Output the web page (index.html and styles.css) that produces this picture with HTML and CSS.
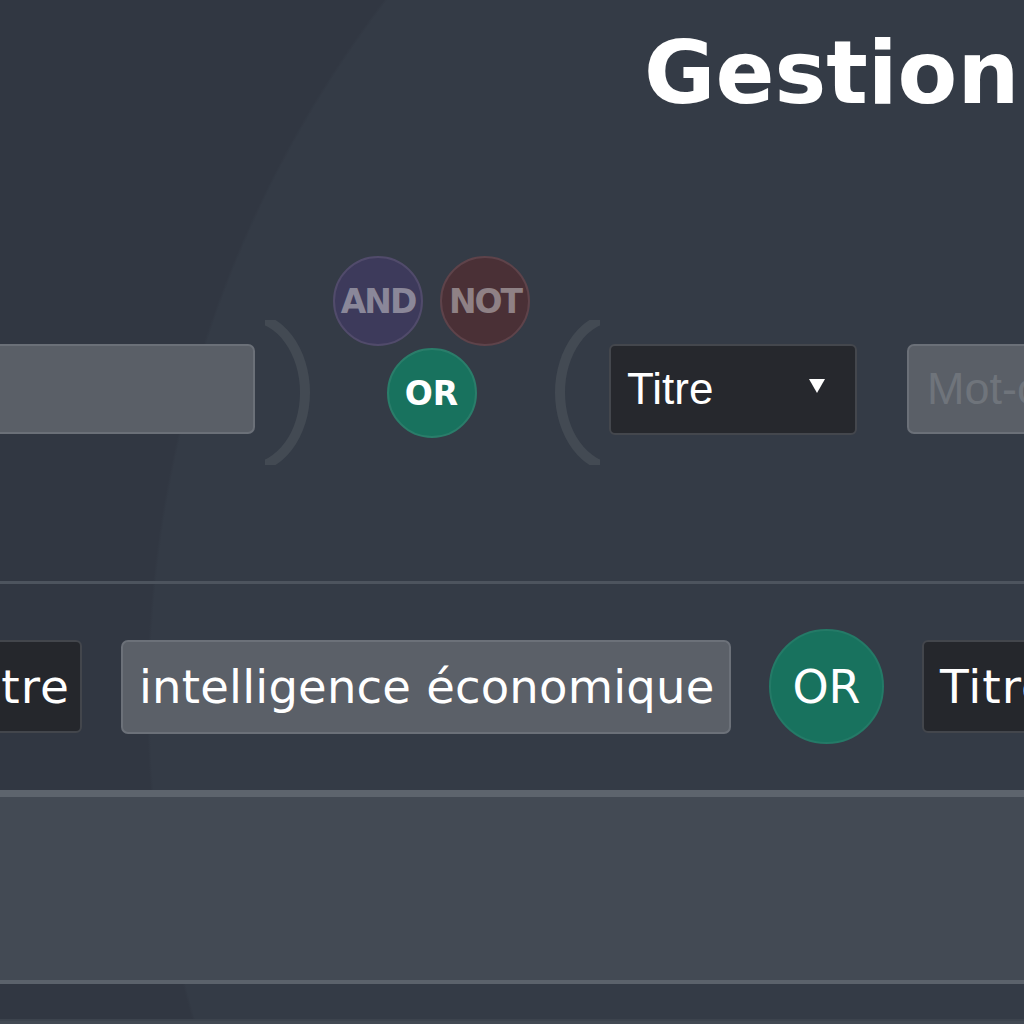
FILE: index.html
```html
<!DOCTYPE html>
<html lang="fr">
<head>
<meta charset="utf-8">
<title>Gestion</title>
<link rel="stylesheet" href="styles.css">
</head>
<body>
<div class="page">
  <h1 class="title">Gestion</h1>

  <div class="query-row">
    <div class="field kw-left"></div>
    <div class="paren paren-close"></div>
    <div class="ops">
      <div class="ops-top">
        <div class="op op-and">AND</div>
        <div class="op op-not">NOT</div>
      </div>
      <div class="op op-or">OR</div>
    </div>
    <div class="paren paren-open"></div>
    <div class="select">
      <span>Titre</span>
      <span class="caret"></span>
    </div>
    <div class="field kw-right"><span class="placeholder">Mot-clé</span></div>
  </div>

  <div class="divider"></div>

  <div class="term-row">
    <div class="chip-select">Titre</div>
    <div class="term">intelligence économique</div>
    <div class="op-big">OR</div>
    <div class="chip-select">Titre</div>
  </div>

  <div class="panel"></div>
  <div class="panel-next"></div>
</div>
</body>
</html>
```

FILE: styles.css
```css
html, body {
  margin: 0;
  padding: 0;
  overflow: hidden;
  height: 100%;
}

body {
  background-color: #323843;
  background-image: radial-gradient(circle at 1300px 700px, #343b46 0, #343b46 1150px, #313742 1153px);
  font-family: "DejaVu Sans", Verdana, sans-serif;
  color: #f4f4f4;
}

.page {
  width: 1024px;
  height: 1024px;
  overflow: hidden;
}

.title {
  margin: 0;
  padding: 23px 0 0 644px;
  font-family: "DejaVu Sans", Verdana, sans-serif;
  font-weight: bold;
  font-size: 87px;
  line-height: 100px;
  height: 100px;
  color: #ffffff;
  white-space: nowrap;
}

/* ---------- row 1 : query builder ---------- */
.query-row {
  display: flex;
  align-items: center;
  height: 266px;
  margin-top: 133px;
  margin-left: -45px;
  white-space: nowrap;
}

.query-row > * {
  flex-shrink: 0;
}

.field {
  box-sizing: border-box;
  height: 90px;
  width: 300px;
  background: #5a5f67;
  border: 2px solid #6b7078;
  border-radius: 7px;
  display: flex;
  align-items: center;
  padding-left: 18px;
  font-family: "Liberation Sans", Arial, sans-serif;
  font-size: 45px;
  overflow: hidden;
}

.placeholder {
  color: #6f747b;
}

.kw-right {
  margin-left: 50px;
}

.paren {
  position: relative;
  width: 45px;
  height: 145px;
  overflow: hidden;
  margin-top: 6px;
}

.paren::before {
  content: "";
  position: absolute;
  top: -8px;
  width: 122px;
  height: 161px;
  box-sizing: border-box;
  border: 10px solid #434a53;
  border-radius: 50%;
}

.paren-close {
  margin-left: 10px;
}

.paren-close::before {
  right: 0;
}

.paren-open {
  margin-left: 25px;
}

.paren-open::before {
  left: 0;
}

.ops {
  align-self: flex-start;
  margin-left: 23px;
  width: 197px;
  display: flex;
  flex-direction: column;
  align-items: center;
  gap: 2px;
}

.ops-top {
  display: flex;
  gap: 17px;
}

.op {
  box-sizing: border-box;
  width: 90px;
  height: 90px;
  border-radius: 50%;
  display: flex;
  align-items: center;
  justify-content: center;
  font-size: 33px;
  font-weight: bold;
  letter-spacing: -2px;
  overflow: visible;
}

.op-and {
  background: #3d3a5b;
  border: 2px solid #514b6b;
  color: #8a8799;
}

.op-not {
  background: #4a3036;
  border: 2px solid #5e434a;
  color: #8f8185;
}

.op-or {
  background: #18725e;
  border: 2px solid #2a7d6a;
  color: #ffffff;
  font-weight: bold;
  font-size: 33px;
  letter-spacing: 0;
}

.select {
  box-sizing: border-box;
  margin-left: 9px;
  width: 248px;
  height: 91px;
  background: #26282d;
  border: 2px solid #44474d;
  border-radius: 6px;
  display: flex;
  align-items: center;
  justify-content: space-between;
  padding: 0 30px 0 16px;
  font-family: "Liberation Sans", Arial, sans-serif;
  font-size: 44px;
  color: #ffffff;
}

.caret {
  width: 0;
  height: 0;
  border-left: 8px solid transparent;
  border-right: 8px solid transparent;
  border-top: 14px solid #ffffff;
  margin-top: -6px;
}

/* ---------- divider ---------- */
.divider {
  margin-top: 59px;
  height: 3px;
  background: #4d545e;
}

/* ---------- row 2 : terms ---------- */
.term-row {
  display: flex;
  align-items: center;
  height: 115px;
  margin-top: 45px;
  margin-left: -59px;
  gap: 38px;
  white-space: nowrap;
}

.term-row > * {
  flex-shrink: 0;
}

.chip-select {
  box-sizing: border-box;
  width: 141px;
  height: 93px;
  background: #25272c;
  border: 2px solid #43464c;
  border-radius: 6px;
  display: flex;
  align-items: center;
  padding-left: 16px;
  font-size: 47px;
  letter-spacing: 1px;
  color: #ffffff;
  overflow: hidden;
}

.term {
  box-sizing: border-box;
  width: 610px;
  height: 94px;
  background: #5b6068;
  border: 2px solid #6c7179;
  border-radius: 7px;
  display: flex;
  align-items: center;
  padding-left: 16px;
  font-size: 46.5px;
  letter-spacing: 0.2px;
  color: #ffffff;
  margin-left: 1px;
}

.op-big {
  box-sizing: border-box;
  width: 115px;
  height: 115px;
  border-radius: 50%;
  background: #18725e;
  border: 2px solid #247a67;
  display: flex;
  align-items: center;
  justify-content: center;
  font-size: 46px;
  color: #ffffff;
}

/* ---------- panels ---------- */
.panel {
  margin-top: 46px;
  height: 183px;
  background: #434a54;
  border-top: 7px solid #5d646d;
  border-bottom: 4px solid #5b626b;
}

.panel-next {
  margin-top: 35px;
  height: 40px;
  background: #424953;
  border-top: 2px solid #3c434d;
}
```
